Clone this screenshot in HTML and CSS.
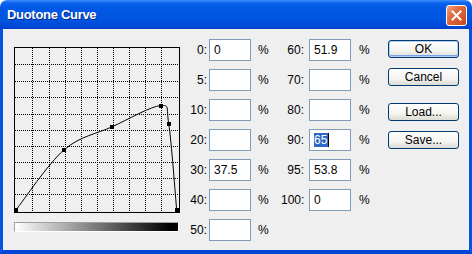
FILE: index.html
```html
<!DOCTYPE html>
<html lang="en">
<head>
    <meta charset="UTF-8">
    <title>Duotone Curve</title>
    <link rel="stylesheet" href="styles.css">
</head>
<body>
    <div class="window">
        <div class="titlebar">
            <span class="title">Duotone Curve</span>
            <button class="close" aria-label="Close">
                <svg width="11" height="11" viewBox="0 0 11 11">
                    <path d="M1.5 1.5 L9.5 9.5 M9.5 1.5 L1.5 9.5" stroke="#fff" stroke-width="2" stroke-linecap="square"/>
                </svg>
            </button>
        </div>

        <div class="content">
            <div class="curve-col">
                <svg class="graph" width="166" height="166" viewBox="0 0 166 166">
                    <g stroke="#000" stroke-width="1" stroke-dasharray="1 1">
                        <line x1="18.5" y1="1" x2="18.5" y2="165"/>
                        <line x1="35.5" y1="1" x2="35.5" y2="165"/>
                        <line x1="51.5" y1="1" x2="51.5" y2="165"/>
                        <line x1="67.5" y1="1" x2="67.5" y2="165"/>
                        <line x1="83.5" y1="1" x2="83.5" y2="165"/>
                        <line x1="99.5" y1="1" x2="99.5" y2="165"/>
                        <line x1="115.5" y1="1" x2="115.5" y2="165"/>
                        <line x1="131.5" y1="1" x2="131.5" y2="165"/>
                        <line x1="147.5" y1="1" x2="147.5" y2="165"/>
                        <line x1="1" y1="17.5" x2="165" y2="17.5"/>
                        <line x1="1" y1="34.5" x2="165" y2="34.5"/>
                        <line x1="1" y1="50.5" x2="165" y2="50.5"/>
                        <line x1="1" y1="67.5" x2="165" y2="67.5"/>
                        <line x1="1" y1="83.5" x2="165" y2="83.5"/>
                        <line x1="1" y1="99.5" x2="165" y2="99.5"/>
                        <line x1="1" y1="115.5" x2="165" y2="115.5"/>
                        <line x1="1" y1="131.5" x2="165" y2="131.5"/>
                        <line x1="1" y1="147.5" x2="165" y2="147.5"/>
                    </g>
                    <rect x="0.5" y="0.5" width="165" height="165" fill="none" stroke="#000"/>
                    <path d="M1.7 163.3 C9.8 153.2 33.9 116.8 50 102.9 C66.1 89 82.2 87.1 98.3 79.7 C114.4 72.3 137.2 59.1 146.6 58.6 C156 58.1 152 59.3 154.7 76.7 C157.4 94 161.4 148.9 162.7 163.3"
                          fill="none" stroke="#000" stroke-width="1"/>
                    <g fill="#000">
                        <rect x="0" y="161" width="4" height="4"/>
                        <rect x="48" y="101" width="4" height="4"/>
                        <rect x="96" y="78" width="4" height="4"/>
                        <rect x="145" y="57" width="4" height="4"/>
                        <rect x="153" y="75" width="4" height="4"/>
                        <rect x="161" y="161" width="4" height="4"/>
                    </g>
                </svg>
                <div class="ramp"></div>
            </div>

            <div class="fields">
                <label class="lbl">0:</label>
                <div class="field">0</div>
                <span class="pct">%</span>
                <label class="lbl lbl-2">60:</label>
                <div class="field">51.9</div>
                <span class="pct pct-2">%</span>

                <label class="lbl">5:</label>
                <div class="field"></div>
                <span class="pct">%</span>
                <label class="lbl lbl-2">70:</label>
                <div class="field"></div>
                <span class="pct pct-2">%</span>

                <label class="lbl">10:</label>
                <div class="field"></div>
                <span class="pct">%</span>
                <label class="lbl lbl-2">80:</label>
                <div class="field"></div>
                <span class="pct pct-2">%</span>

                <label class="lbl">20:</label>
                <div class="field"></div>
                <span class="pct">%</span>
                <label class="lbl lbl-2">90:</label>
                <div class="field"><span class="selected">65</span><span class="caret"></span></div>
                <span class="pct pct-2">%</span>

                <label class="lbl">30:</label>
                <div class="field">37.5</div>
                <span class="pct">%</span>
                <label class="lbl lbl-2">95:</label>
                <div class="field">53.8</div>
                <span class="pct pct-2">%</span>

                <label class="lbl">40:</label>
                <div class="field"></div>
                <span class="pct">%</span>
                <label class="lbl lbl-2">100:</label>
                <div class="field">0</div>
                <span class="pct pct-2">%</span>

                <label class="lbl">50:</label>
                <div class="field"></div>
                <span class="pct">%</span>
            </div>

            <div class="actions">
                <button class="btn default">OK</button>
                <button class="btn">Cancel</button>
                <button class="btn spaced">Load...</button>
                <button class="btn">Save...</button>
            </div>
        </div>
    </div>
</body>
</html>
```

FILE: styles.css
```css
body {
    margin: 0;
    background: #ffffff;
    font-family: "Liberation Sans", Arial, sans-serif;
    font-size: 12px;
    color: #000;
}

.window {
    width: 472px;
    height: 254px;
    display: flex;
    flex-direction: column;
}

.titlebar {
    height: 29px;
    box-sizing: border-box;
    border-radius: 7px 7px 0 0;
    background: linear-gradient(to bottom, #3d8ffc 0, #0c62ea 3px, #0058e6 8px, #0054e0 20px, #0149d7 26px, #003fca 29px);
    display: flex;
    align-items: center;
    padding: 0 5px 0 7px;
}

.title {
    flex: 1;
    color: #fff;
    font-weight: bold;
    font-size: 13px;
    letter-spacing: -0.3px;
    text-shadow: 1px 1px 0 #0a2a8a;
    padding-bottom: 1px;
}

.close {
    width: 21px;
    height: 21px;
    margin-top: 2px;
    padding: 0;
    border: 1px solid #fff;
    border-radius: 3px;
    background: linear-gradient(135deg, #f0a07f 0%, #e06a3e 40%, #c8461c 100%);
    display: flex;
    align-items: center;
    justify-content: center;
}

.content {
    flex: 1;
    display: flex;
    background: #efefef;
    border-left: 3px solid #0553e2;
    border-right: 3px solid #0553e2;
    border-bottom: 4px solid #0444d4;
}

.curve-col {
    padding: 18px 0 0 11px;
    display: flex;
    flex-direction: column;
}

.graph {
    display: block;
    background: #efefef;
}

.ramp {
    width: 165px;
    height: 10px;
    margin-top: 9px;
    box-sizing: border-box;
    border-top: 1px solid #a0a0a0;
    border-left: 1px solid #a0a0a0;
    border-bottom: 1px solid #fff;
    border-right: 1px solid #fff;
    background: linear-gradient(to right, #ffffff, #000000 95%);
}

.fields {
    margin-left: 5px;
    padding-top: 10px;
    display: grid;
    grid-template-columns: 24px 42px 30px 28px 42px 20px;
    grid-auto-rows: 22px;
    row-gap: 8px;
    align-items: center;
    align-content: start;
}

.lbl {
    text-align: right;
    padding-right: 2px;
}

.lbl-2 {
    padding-right: 5px;
}

.field {
    height: 22px;
    box-sizing: border-box;
    border: 1px solid #7f9db9;
    background: #fff;
    padding: 0 4px;
    display: flex;
    align-items: center;
    font-size: 12px;
}

.pct {
    padding-left: 7px;
}

.pct-2 {
    padding-left: 8px;
}

.selected {
    background: #316ac5;
    color: #fff;
    line-height: 14px;
    padding-right: 1px;
}

.caret {
    width: 1px;
    height: 14px;
    background: #000;
}

.actions {
    margin-left: auto;
    padding: 11px 10px 0 0;
    display: flex;
    flex-direction: column;
}

.btn {
    width: 71px;
    height: 18px;
    margin-bottom: 10px;
    padding: 0;
    font-family: "Liberation Sans", Arial, sans-serif;
    font-size: 12px;
    color: #000;
    border: 1px solid #003c74;
    border-radius: 3px;
    background: linear-gradient(to bottom, #ffffff 0%, #f4f4f0 60%, #dcdcd4 100%);
}

.btn.default {
    box-shadow: inset 0 0 0 1px #b6cdf5, inset 0 -1px 0 1px #7aa2e8;
}

.btn.spaced {
    margin-top: 7px;
}
```
